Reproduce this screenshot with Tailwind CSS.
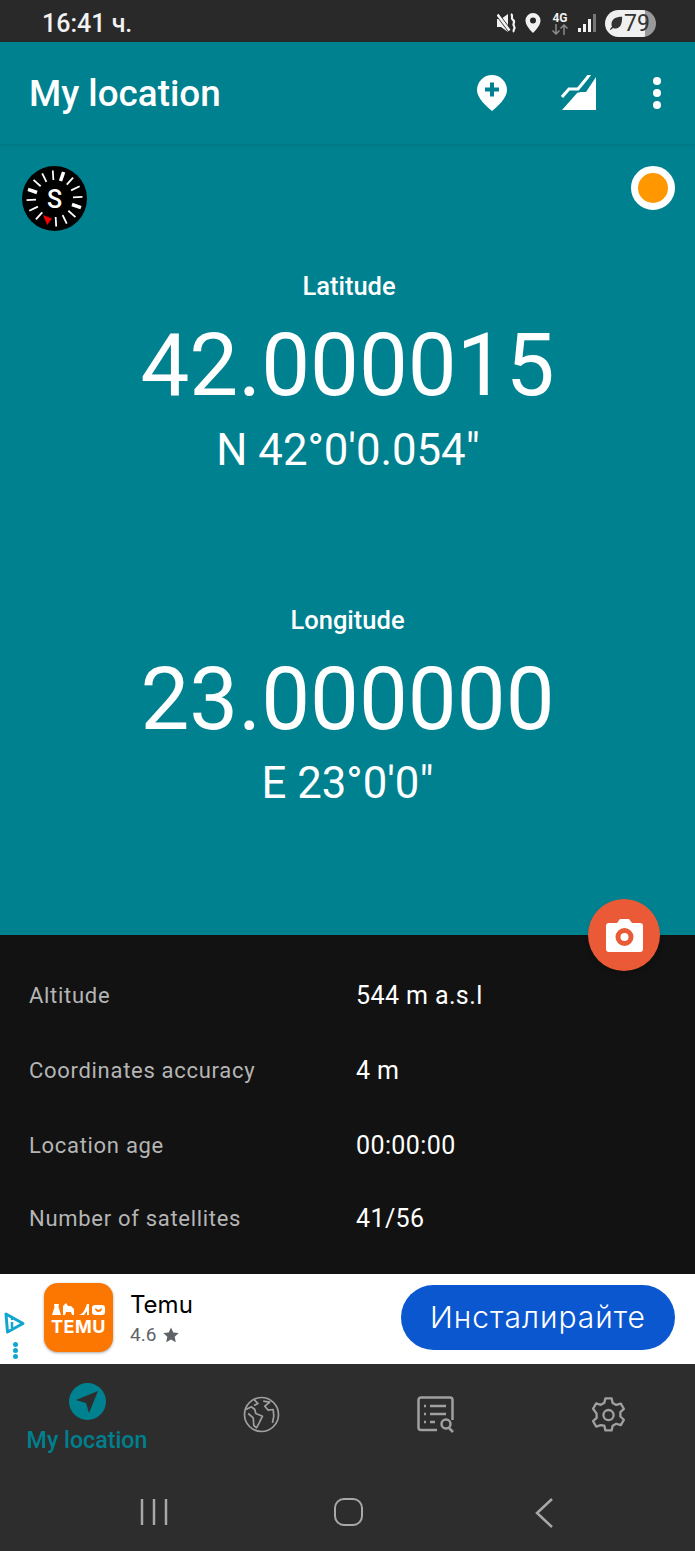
<!DOCTYPE html>
<html lang="en">
<head>
  <meta charset="UTF-8">
  <title>My location</title>
  <script src="https://cdn.jsdelivr.net/npm/@tailwindcss/browser@4"></script>
</head>
<body class="bg-[#2d2d2d] font-['Roboto',sans-serif] w-[695px] h-[1551px] overflow-hidden">

  <!-- status bar -->
  <div class="h-[42px] bg-[#292929] flex items-center justify-between pl-[42px] pr-[39px] pt-[4px] text-[#f2f2f2]">
    <span class="text-[25px] font-medium leading-none">16:41 ч.</span>
    <div class="flex items-center">
      <svg class="w-[20px] h-[20px]" viewBox="0 0 20 20" fill="none">
        <path d="M0 6h4l7-5v18l-7-5H0z" fill="#f2f2f2"/>
        <path d="M0 1l13 17" stroke="#292929" stroke-width="4"/>
        <path d="M.5 1.500l12 16" stroke="#f2f2f2" stroke-width="2.500"/>
        <path d="M14 1c3 2-1 4 2 6s-1 3 1 6-2 4 0 6" stroke="#f2f2f2" stroke-width="2.200"/>
      </svg>
      <svg class="w-[16px] h-[20px] ml-[8px]" viewBox="0 0 16 20">
        <path fill-rule="evenodd" d="M8 0a7.500 7.500 0 0 1 7.500 7.500C15.500 12 11 17 8 20 5 17 .5 12 .5 7.500A7.500 7.500 0 0 1 8 0zm0 4.500a3 3 0 1 0 0 6 3 3 0 0 0 0-6z" fill="#f2f2f2"/>
      </svg>
      <div class="w-[20px] ml-[9px] flex flex-col items-center">
        <span class="text-[12px] font-bold leading-[12px]">4G</span>
        <svg class="w-[18px] h-[11px]" viewBox="0 0 18 11" fill="none" stroke="#8a8a8a" stroke-width="1.500">
          <path d="M5 0v10M1.500 6.500 5 10l3.500-3.500M13 11V1M9.500 4.500 13 1l3.500 3.500"/>
        </svg>
      </div>
      <svg class="w-[20px] h-[20px] ml-[7px]" viewBox="0 0 20 20">
        <rect x="1" y="15" width="3" height="4" fill="#f2f2f2"/>
        <rect x="6" y="11" width="3" height="8" fill="#f2f2f2"/>
        <rect x="11" y="6" width="3" height="13" fill="#f2f2f2"/>
        <rect x="16" y="1" width="3" height="18" fill="#777"/>
      </svg>
      <div class="ml-[8px] w-[51px] h-[27px] rounded-full bg-[linear-gradient(90deg,#f0f0f0_0,#f0f0f0_79%,#999_79%)] flex items-center pl-[4px] text-[#333]">
        <svg class="w-[14px] h-[14px]" viewBox="0 0 17 17">
          <path d="M16 1C8 1 3 4 3 10c0 1 .2 2 .6 3L1 16l1 1 3-2.500c1 .5 2 .7 3 .7 6 0 8-6 8-14.200z" fill="#333"/>
        </svg>
        <span class="text-[23px] leading-none ml-[1px]">79</span>
      </div>
    </div>
  </div>

  <!-- app bar -->
  <header class="h-[102px] bg-[#00818f] flex items-center pl-[29px] shadow-[0_1px_3px_rgba(0,0,0,0.12)] relative z-10">
    <h1 class="text-[36.800px] font-medium text-white leading-none flex-1 mt-[3px]">My location</h1>
    <svg class="w-[30px] h-[36px] mr-[54px]" viewBox="0 0 30 36">
      <path d="M15 0a15 15 0 0 1 15 15c0 8-9 16-15 21C9 31 0 23 0 15A15 15 0 0 1 15 0z" fill="#fff"/>
      <path d="M15 7.500v14M8 14.500h14" stroke="#00818f" stroke-width="4"/>
    </svg>
    <svg class="w-[36px] h-[36px] mr-[56px]" viewBox="0 0 36 36" fill="none">
      <path d="M35 2v33H1l16-18h8z" fill="#fff"/>
      <path d="M1 22l7-8h9l9-11 3-3" stroke="#00818f" stroke-width="7"/>
      <path d="M1 22l7-8h9l9-11 3-4" stroke="#fff" stroke-width="3"/>
    </svg>
    <div class="flex flex-col gap-[4px] mr-[34px]">
      <span class="w-[8px] h-[8px] rounded-full bg-white"></span>
      <span class="w-[8px] h-[8px] rounded-full bg-white"></span>
      <span class="w-[8px] h-[8px] rounded-full bg-white"></span>
    </div>
  </header>

  <!-- coordinates -->
  <main class="h-[791px] bg-[#00818f] relative text-white text-center">
    <svg class="absolute left-[22px] top-[22px] w-[65px] h-[65px]" viewBox="0 0 65 65" fill="none" stroke="#fff" stroke-width="1.800">
      <circle cx="32.500" cy="32.500" r="32.500" fill="#000" stroke="none"/>
      <g>
        <path d="M32.500 4.500V14" transform="rotate(-3.500 32.500 32.500)"/>
        <path d="M32.500 4.500V14" transform="rotate(19 32.500 32.500)" stroke-width="3.500"/>
        <path d="M32.500 4.500V14" transform="rotate(41.500 32.500 32.500)"/>
        <path d="M32.500 4.500V14" transform="rotate(64 32.500 32.500)"/>
        <path d="M32.500 4.500V14" transform="rotate(86.500 32.500 32.500)"/>
        <path d="M32.500 4.500V14" transform="rotate(109 32.500 32.500)" stroke-width="3.500"/>
        <path d="M32.500 4.500V14" transform="rotate(131.500 32.500 32.500)"/>
        <path d="M32.500 4.500V14" transform="rotate(154 32.500 32.500)"/>
        <path d="M32.500 4.500V14" transform="rotate(176.500 32.500 32.500)"/>
        <path d="M32.500 4.500V14" transform="rotate(221.500 32.500 32.500)"/>
        <path d="M32.500 4.500V14" transform="rotate(244 32.500 32.500)"/>
        <path d="M32.500 4.500V14" transform="rotate(266.500 32.500 32.500)"/>
        <path d="M32.500 4.500V14" transform="rotate(289 32.500 32.500)" stroke-width="3.500"/>
        <path d="M32.500 4.500V14" transform="rotate(311.500 32.500 32.500)"/>
        <path d="M32.500 4.500V14" transform="rotate(334 32.500 32.500)"/>
      </g>
      <polygon points="21,49 30,52.500 25.200,59" fill="#f00000" stroke="none"/>
      <text x="32.500" y="41.500" text-anchor="middle" font-family="Roboto" font-weight="500" font-size="25" fill="#fff" stroke="none">S</text>
    </svg>
    <div class="absolute right-[20px] top-[22px] w-[44px] h-[44px] rounded-full bg-[#ff9800] border-[7px] border-white"></div>

    <div class="pt-[128px]">
      <div class="text-[25.500px] font-medium leading-[28px] pl-[3px]">Latitude</div>
      <div class="text-[87px] leading-[100px] mt-[15px]">42.000015</div>
      <div class="text-[43.700px] leading-[50px] mt-[10px] pl-[1px]">N 42°0'0.054"</div>
    </div>
    <div class="pt-[131px]">
      <div class="text-[25.500px] font-medium leading-[28px]">Longitude</div>
      <div class="text-[87px] leading-[100px] mt-[15px]">23.000000</div>
      <div class="text-[43.700px] leading-[50px] mt-[9px]">E 23°0'0"</div>
    </div>

    <button class="absolute right-[35px] top-[755px] w-[72px] h-[72px] rounded-full bg-[#ea5a36] shadow-md flex items-center justify-center z-10">
      <svg class="w-[37px] h-[33px]" viewBox="0 0 37 33">
        <path fill-rule="evenodd" d="M3 4h8l3-4h9l3 4h8a3 3 0 0 1 3 3v23a3 3 0 0 1-3 3H3a3 3 0 0 1-3-3V7a3 3 0 0 1 3-3zm15.500 5a9 9 0 1 0 0 18 9 9 0 0 0 0-18zm0 5a4 4 0 1 1 0 8 4 4 0 0 1 0-8z" fill="#fff"/>
      </svg>
    </button>
  </main>

  <!-- details -->
  <section class="h-[339px] bg-[#121212] pl-[29px] pt-[46px] text-[22px] tracking-[0.7px]">
    <div class="h-[75px] flex items-start leading-[30px]">
      <span class="w-[327px] text-[#b5b5b5]">Altitude</span>
      <span class="text-white text-[25px] tracking-[0.4px]">544 m a.s.l</span>
    </div>
    <div class="h-[75px] flex items-start leading-[30px]">
      <span class="w-[327px] text-[#b5b5b5]">Coordinates accuracy</span>
      <span class="text-white text-[25px] tracking-[0.4px]">4 m</span>
    </div>
    <div class="h-[73px] flex items-start leading-[30px]">
      <span class="w-[327px] text-[#b5b5b5]">Location age</span>
      <span class="text-white text-[25px] tracking-[0.4px]">00:00:00</span>
    </div>
    <div class="flex items-start leading-[30px]">
      <span class="w-[327px] text-[#b5b5b5]">Number of satellites</span>
      <span class="text-white text-[25px] tracking-[0.4px]">41/56</span>
    </div>
  </section>

  <!-- ad banner -->
  <aside class="h-[90px] bg-white flex items-center relative">
    <div class="w-[44px] flex flex-col items-center pr-[14px] pt-[38px] self-start gap-[7px]">
      <svg class="w-[22px] h-[23px]" viewBox="0 0 22 23" fill="none">
        <path d="M2 2l17 9.500L3.500 20z" stroke="#12a5cf" stroke-width="3" stroke-linejoin="round"/>
        <path d="M8 10v6" stroke="#12a5cf" stroke-width="2.500"/>
        <circle cx="8" cy="7" r="1.300" fill="#12a5cf"/>
      </svg>
      <div class="flex flex-col gap-[1px]">
        <span class="w-[5px] h-[5px] rounded-full bg-[#12a5cf]"></span>
        <span class="w-[5px] h-[5px] rounded-full bg-[#12a5cf]"></span>
        <span class="w-[5px] h-[5px] rounded-full bg-[#12a5cf]"></span>
      </div>
    </div>
    <div class="w-[69px] h-[69px] mb-[4px] rounded-[14px] bg-[#fb7701] shadow-[0_1px_3px_rgba(0,0,0,0.35)] flex flex-col items-center pt-[20px]">
      <svg class="w-[54px] h-[13px]" viewBox="0 0 54 13" fill="#fff">
        <path d="M2 1h5l-.5 3L9 12H0l2.500-8z"/>
        <path d="M11 3l3-3 2 3h3l3 3v6h-2l-1-3h-5l-1 3h-2V6z"/>
        <path d="M25 12c4 0 6-2 8-6l2-5h2v11h-2V8l-3 4z"/>
        <path fill-rule="evenodd" d="M43 2h7a3 3 0 0 1 3 3v4a3 3 0 0 1-3 3h-7a3 3 0 0 1-3-3V5a3 3 0 0 1 3-3zm0 3c0 3 2 4 3.500 4S50 8 50 5l-3.500 2z"/>
      </svg>
      <span class="text-white font-['Inter',sans-serif] font-bold text-[18px] leading-[20px] tracking-[0.5px] mt-[1px]">TEMU</span>
    </div>
    <div class="ml-[17px] flex-1">
      <div class="text-[24px] leading-[30px] text-black font-['Inter',sans-serif]">Temu</div>
      <div class="flex items-center text-[19px] leading-[26px] text-[#5f6368] mt-[2px]">
        4.6
        <svg class="w-[16px] h-[16px] ml-[7px]" viewBox="0 0 16 16"><path d="M8 .5l2.300 5 5.400.6-4 3.700 1.100 5.400L8 12.500l-4.800 2.700 1.100-5.400-4-3.700 5.400-.6z" fill="#5f6368"/></svg>
      </div>
    </div>
    <button class="w-[274px] h-[65px] mr-[20px] mb-[4px] rounded-full bg-[#0b57d0] text-white text-[30px] tracking-[1px] font-['Inter',sans-serif] font-light">Инсталирайте</button>
  </aside>

  <!-- bottom nav -->
  <nav class="h-[112px] flex text-[#007f8d]">
    <div class="w-[174px] flex flex-col items-center pt-[19px]">
      <div class="w-[37px] h-[37px] rounded-full bg-[#00818f] flex items-center justify-center">
        <svg class="w-[24px] h-[24px]" viewBox="0 0 24 24"><path d="M23 1L14 23l-3-10L1 10z" fill="#2d2d2d"/></svg>
      </div>
      <span class="text-[23.200px] font-medium leading-[28px] mt-[6px]">My location</span>
    </div>
    <div class="w-[174px] flex justify-center pt-[32px]">
      <svg class="w-[37px] h-[37px]" viewBox="0 0 37 37" fill="none" stroke="#a0a0a0" stroke-width="1.700" stroke-linejoin="round">
        <circle cx="18.500" cy="18.500" r="17"/>
        <path d="M2.800 13.500l5.700-2.700 3.300 2.700 1 4 6.700 2.700-3.300 6.600-2.700 5-2.700-2.300-.6-7.700-5-4.300"/>
        <path d="M20.200 5.200l6.600 1-5 4 3.400 4 5-.7.600 6.700-1.300 6.600"/>
        <path d="M11 3.500l4 4-4 2"/>
      </svg>
    </div>
    <div class="w-[174px] flex justify-center pt-[32px]">
      <svg class="w-[37px] h-[37px]" viewBox="0 0 37 37" fill="none" stroke="#a0a0a0" stroke-width="2.500">
        <path d="M20 34H4a2.500 2.500 0 0 1-2.500-2.500V4A2.500 2.500 0 0 1 4 1.500h29A2.500 2.500 0 0 1 35.500 4v20"/>
        <path d="M13 10h16M13 18h16M13 26h5M7 10h2M7 18h2M7 26h2"/>
        <circle cx="29" cy="28" r="4.500"/>
        <path d="M32 32l4 4"/>
      </svg>
    </div>
    <div class="w-[173px] flex justify-center pt-[32px]">
      <svg class="w-[37px] h-[37px]" viewBox="0 0 24 24" fill="none" stroke="#a0a0a0" stroke-width="1.500" stroke-linejoin="round">
        <path d="M10 1.500h4l.7 3 2.300 1.300 3-.9 2 3.500-2.300 2.100v2.800l2.300 2.100-2 3.500-3-.9-2.300 1.300-.7 3h-4l-.7-3L7 18.900l-3 .9-2-3.500 2.300-2.100v-2.800L2 8.300l2-3.500 3 .9 2.300-1.300z"/>
        <circle cx="12" cy="12.400" r="3.300"/>
      </svg>
    </div>
  </nav>

  <!-- android nav -->
  <div class="h-[75px] flex items-start text-[#b0b0b0]">
    <div class="w-[308px] flex justify-center pt-[22px]">
      <svg class="w-[28px] h-[28px]" viewBox="0 0 28 28" stroke="#a8a8a8" stroke-width="2.500"><path d="M2 1v26M14 1v26M26 1v26"/></svg>
    </div>
    <div class="w-[80px] flex justify-center pt-[22px]">
      <div class="w-[29px] h-[28px] rounded-[10px] border-[2.500px] border-[#a8a8a8]"></div>
    </div>
    <div class="flex-1 flex justify-center pt-[22px] pl-[4px]">
      <svg class="w-[20px] h-[30px]" viewBox="0 0 20 30" fill="none" stroke="#a8a8a8" stroke-width="2.500"><path d="M18 1L3 15l15 14"/></svg>
    </div>
  </div>

</body>
</html>
